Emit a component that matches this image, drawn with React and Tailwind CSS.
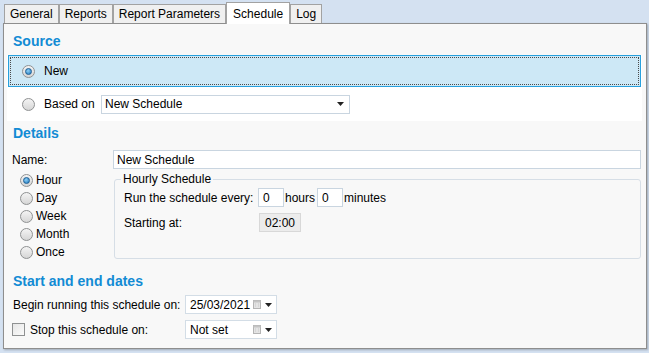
import React from 'react';

function Radio({ checked }) {
  return (
    <span className="flex h-[13px] w-[13px] shrink-0 items-center justify-center rounded-full border border-[#8f9192] bg-linear-to-b from-[#f4f4f4] to-[#d6d6d6]">
      {checked && (
        <span className="h-[7px] w-[7px] rounded-full border border-[#1d5f95] bg-[radial-gradient(circle_at_40%_35%,#8fd0f5,#1b76bd)]" />
      )}
    </span>
  );
}

function Checkbox() {
  return (
    <span className="h-[13px] w-[13px] shrink-0 border border-[#8f9192] bg-linear-to-br from-[#e6e6e6] to-[#fbfbfb]" />
  );
}

function Tab({ label, active }) {
  if (active) {
    return (
      <div className="relative z-10 -mb-px flex h-[22px] items-center border border-b-0 border-[#a2a2a2] bg-white px-[6px]">
        {label}
      </div>
    );
  }
  return (
    <div className="flex h-[19px] items-center border border-b-0 border-[#a2a2a2] bg-[#f0f0f0] px-[5px]">
      {label}
    </div>
  );
}

function CalendarIcon() {
  return (
    <svg width="8" height="9" viewBox="0 0 8 9" className="shrink-0">
      <rect x="0.5" y="0.5" width="7" height="8" fill="#e4e4e4" stroke="#b4b4b4" />
      <rect x="0.5" y="0.5" width="7" height="2" fill="#c4c4c4" />
      <path d="M2 4h1M5 4h1M2 6h1M5 6h1" stroke="#c8c8c8" />
    </svg>
  );
}

function Arrow() {
  return (
    <svg width="7" height="4" viewBox="0 0 7 4" className="shrink-0">
      <path d="M0 0h7L3.5 4z" fill="#222" />
    </svg>
  );
}

function DateBox({ value }) {
  return (
    <div className="flex h-[19px] w-[92px] items-center border border-[#d3dde6] bg-white pl-[4px] pr-[4px]">
      <span className="flex-1">{value}</span>
      <CalendarIcon />
      <span className="ml-[4px]">
        <Arrow />
      </span>
    </div>
  );
}

function Heading({ children, className }) {
  return (
    <div className={`flex h-[24px] items-center pl-[9px] text-[14px] font-bold text-[#128bd4] ${className}`}>
      {children}
    </div>
  );
}

const field = 'flex h-[19px] items-center border border-[#c9d5e0] bg-white';

export default function App() {
  const periods = ['Hour', 'Day', 'Week', 'Month', 'Once'];

  return (
    <div className="h-[353px] w-[649px] overflow-hidden bg-[#d4e1f1] pt-[2px] font-['Liberation_Sans',Arial,sans-serif] text-[12px] leading-[14px] text-black">
      <div className="flex h-[21px] items-end pl-[4px]">
        <Tab label="General" />
        <Tab label="Reports" />
        <Tab label="Report Parameters" />
        <Tab label="Schedule" active />
        <Tab label="Log" />
      </div>

      <div className="ml-[3px] h-[326px] w-[644px] border border-[#8e8e8e] bg-[#f8f8f8] shadow-[1px_1px_2px_rgba(0,0,0,0.25)]">
        <Heading className="mt-[5px]">Source</Heading>

        <div className="ml-[3px] mt-[2px] w-[635px] bg-white pl-[1px]">
          <div className="h-[32px] w-[633px] border border-[#27a0dd] bg-[#cde8f6] p-[1px]">
            <div className="flex h-[28px] items-center border border-dotted border-[#4a4a4a] pl-[11px]">
              <Radio checked />
              <span className="ml-[9px]">New</span>
            </div>
          </div>
          <div className="flex h-[34px] items-center pl-[14px]">
            <Radio />
            <span className="ml-[9px] w-[57px]">Based on</span>
            <div className="flex h-[19px] w-[249px] items-center border border-[#c9d5e0] bg-white pl-[3px] pr-[5px]">
              <span className="flex-1">New Schedule</span>
              <Arrow />
            </div>
          </div>
        </div>

        <Heading>Details</Heading>

        <div className="mt-[5px] flex items-center">
          <span className="w-[109px] pl-[8px]">Name:</span>
          <div className={`${field} h-[19px] w-[528px] pl-[3px]`}>New Schedule</div>
        </div>

        <div className="mt-[2px] flex">
          <div className="w-[110px] pl-[16px]">
            {periods.map((p, i) => (
              <div key={p} className="flex h-[18px] items-center">
                <Radio checked={i === 0} />
                <span className="ml-[3px]">{p}</span>
              </div>
            ))}
          </div>

          <fieldset className="h-[88px] w-[527px] rounded-[3px] border border-[#d6dee6] pl-[6px]">
            <legend className="px-[2px] leading-[16px]">Hourly Schedule</legend>
            <div className="pl-[3px]">
              <div className="mt-[1px] flex h-[19px] items-center">
                <span className="w-[134px]">Run the schedule every:</span>
                <div className={`${field} w-[26px] pl-[4px]`}>0</div>
                <span className="ml-[1px] w-[32px]">hours</span>
                <div className={`${field} w-[26px] pl-[4px]`}>0</div>
                <span className="ml-[1px]">minutes</span>
              </div>
              <div className="mt-[6px] flex h-[19px] items-center">
                <span className="w-[135px]">Starting at:</span>
                <div className="flex h-[19px] w-[42px] items-center justify-center border border-[#d8d8d8] bg-[#ececec]">
                  02:00
                </div>
              </div>
            </div>
          </fieldset>
        </div>

        <Heading className="mt-[8px]">Start and end dates</Heading>

        <div className="mt-[2px] flex items-center pl-[9px]">
          <span className="w-[172px]">Begin running this schedule on:</span>
          <DateBox value="25/03/2021" />
        </div>
        <div className="mt-[6px] flex items-center pl-[8px]">
          <Checkbox />
          <span className="ml-[5px] w-[155px]">Stop this schedule on:</span>
          <DateBox value="Not set" />
        </div>
      </div>
    </div>
  );
}
